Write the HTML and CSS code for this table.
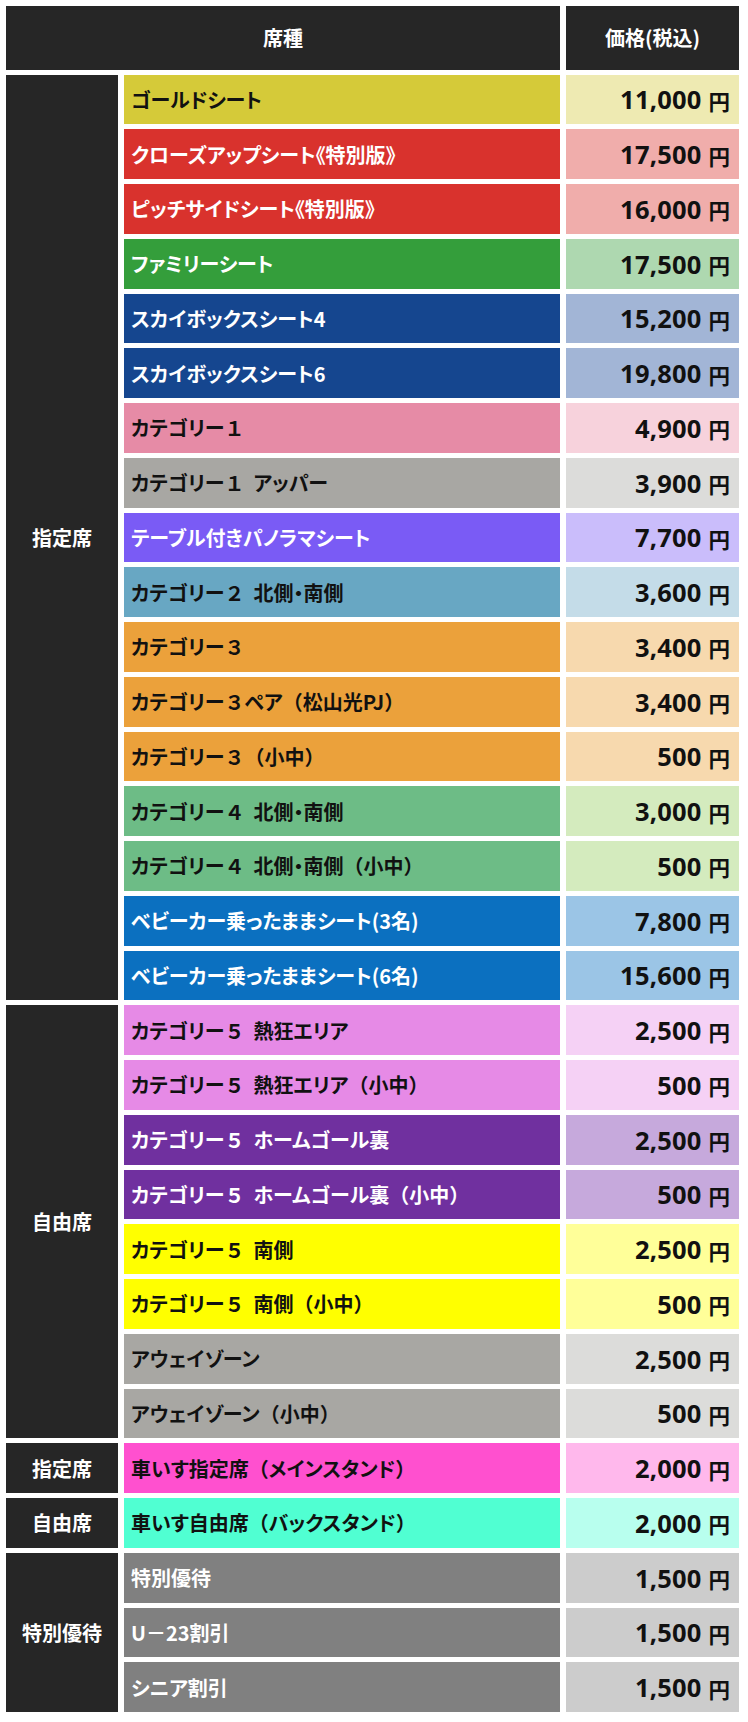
FILE: index.html
```html
<!DOCTYPE html>
<html lang="ja">
<head>
<meta charset="utf-8">
<title>席種・価格</title>
<link rel="stylesheet" href="styles.css">
</head>
<body>
<div class="table">
  <div class="head head-name">席種</div>
  <div class="head head-price">価格(税込)</div>

  <div class="grp span-17">指定席</div>
  <div class="name c-gold">ゴールドシート</div><div class="price p-gold"><span class="num">11,000</span><span class="yen">円</span></div>
  <div class="name c-red light">クローズアップシート《特別版》</div><div class="price p-red"><span class="num">17,500</span><span class="yen">円</span></div>
  <div class="name c-red light">ピッチサイドシート《特別版》</div><div class="price p-red"><span class="num">16,000</span><span class="yen">円</span></div>
  <div class="name c-green light">ファミリーシート</div><div class="price p-green"><span class="num">17,500</span><span class="yen">円</span></div>
  <div class="name c-navy light">スカイボックスシート4</div><div class="price p-navy"><span class="num">15,200</span><span class="yen">円</span></div>
  <div class="name c-navy light">スカイボックスシート6</div><div class="price p-navy"><span class="num">19,800</span><span class="yen">円</span></div>
  <div class="name c-pink">カテゴリー<span class="fw">１</span></div><div class="price p-pink"><span class="num">4,900</span><span class="yen">円</span></div>
  <div class="name c-gray">カテゴリー<span class="fw">１</span><span class="sp"></span>アッパー</div><div class="price p-gray"><span class="num">3,900</span><span class="yen">円</span></div>
  <div class="name c-violet light">テーブル付きパノラマシート</div><div class="price p-violet"><span class="num">7,700</span><span class="yen">円</span></div>
  <div class="name c-teal">カテゴリー<span class="fw">２</span><span class="sp"></span>北側・南側</div><div class="price p-teal"><span class="num">3,600</span><span class="yen">円</span></div>
  <div class="name c-orange">カテゴリー<span class="fw">３</span></div><div class="price p-orange"><span class="num">3,400</span><span class="yen">円</span></div>
  <div class="name c-orange">カテゴリー<span class="fw">３</span>ペア<span class="fw">（松山光PJ）</span></div><div class="price p-orange"><span class="num">3,400</span><span class="yen">円</span></div>
  <div class="name c-orange">カテゴリー<span class="fw">３</span><span class="fw">（小中）</span></div><div class="price p-orange"><span class="num">500</span><span class="yen">円</span></div>
  <div class="name c-mint">カテゴリー<span class="fw">４</span><span class="sp"></span>北側・南側</div><div class="price p-mint"><span class="num">3,000</span><span class="yen">円</span></div>
  <div class="name c-mint">カテゴリー<span class="fw">４</span><span class="sp"></span>北側・南側<span class="fw">（小中）</span></div><div class="price p-mint"><span class="num">500</span><span class="yen">円</span></div>
  <div class="name c-blue light">ベビーカー乗ったままシート(3名)</div><div class="price p-blue"><span class="num">7,800</span><span class="yen">円</span></div>
  <div class="name c-blue light">ベビーカー乗ったままシート(6名)</div><div class="price p-blue"><span class="num">15,600</span><span class="yen">円</span></div>

  <div class="grp span-8">自由席</div>
  <div class="name c-lilac">カテゴリー<span class="fw">５</span><span class="sp"></span>熱狂エリア</div><div class="price p-lilac"><span class="num">2,500</span><span class="yen">円</span></div>
  <div class="name c-lilac">カテゴリー<span class="fw">５</span><span class="sp"></span>熱狂エリア<span class="fw">（小中）</span></div><div class="price p-lilac"><span class="num">500</span><span class="yen">円</span></div>
  <div class="name c-purple light">カテゴリー<span class="fw">５</span><span class="sp"></span>ホームゴール裏</div><div class="price p-purple"><span class="num">2,500</span><span class="yen">円</span></div>
  <div class="name c-purple light">カテゴリー<span class="fw">５</span><span class="sp"></span>ホームゴール裏<span class="fw">（小中）</span></div><div class="price p-purple"><span class="num">500</span><span class="yen">円</span></div>
  <div class="name c-yellow">カテゴリー<span class="fw">５</span><span class="sp"></span>南側</div><div class="price p-yellow"><span class="num">2,500</span><span class="yen">円</span></div>
  <div class="name c-yellow">カテゴリー<span class="fw">５</span><span class="sp"></span>南側<span class="fw">（小中）</span></div><div class="price p-yellow"><span class="num">500</span><span class="yen">円</span></div>
  <div class="name c-gray">アウェイゾーン</div><div class="price p-gray"><span class="num">2,500</span><span class="yen">円</span></div>
  <div class="name c-gray">アウェイゾーン<span class="fw">（小中）</span></div><div class="price p-gray"><span class="num">500</span><span class="yen">円</span></div>

  <div class="grp span-1">指定席</div>
  <div class="name c-magenta">車いす指定席<span class="fw">（</span>メインスタンド<span class="fw">）</span></div><div class="price p-magenta"><span class="num">2,000</span><span class="yen">円</span></div>

  <div class="grp span-1">自由席</div>
  <div class="name c-aqua">車いす自由席<span class="fw">（</span>バックスタンド<span class="fw">）</span></div><div class="price p-aqua"><span class="num">2,000</span><span class="yen">円</span></div>

  <div class="grp span-3">特別優待</div>
  <div class="name c-dim light">特別優待</div><div class="price p-dim"><span class="num">1,500</span><span class="yen">円</span></div>
  <div class="name c-dim light">U<span class="fw">－</span>23割引</div><div class="price p-dim"><span class="num">1,500</span><span class="yen">円</span></div>
  <div class="name c-dim light">シニア割引</div><div class="price p-dim"><span class="num">1,500</span><span class="yen">円</span></div>
</div>
</body>
</html>
```

FILE: styles.css
```css
html, body {
  margin: 0;
  padding: 0;
  background: #ffffff;
}

body {
  font-family: "Noto Sans CJK JP", "Noto Sans", sans-serif;
  font-weight: 700;
  color: #111111;
}

.table {
  display: grid;
  grid-template-columns: 112px 436px 173px;
  grid-template-rows: 63.5px;
  grid-auto-rows: 49.75px;
  column-gap: 6px;
  row-gap: 5px;
  margin: 6px 0 0 6px;
  width: 733px;
}

.head {
  background: #262626;
  color: #ffffff;
  display: flex;
  align-items: center;
  justify-content: center;
  font-size: 20px;
}

.head-name {
  grid-column: 1 / 3;
}

.head-price {
  grid-column: 3;
}

.grp {
  grid-column: 1;
  background: #262626;
  color: #ffffff;
  display: flex;
  align-items: center;
  justify-content: center;
  font-size: 20px;
}

.span-17 { grid-row: span 17; }
.span-8 { grid-row: span 8; }
.span-3 { grid-row: span 3; }
.span-1 { grid-row: span 1; }

.name {
  grid-column: 2;
  display: flex;
  align-items: center;
  padding-left: 7px;
  font-size: 20px;
  font-feature-settings: "palt" 1;
  color: #111111;
  white-space: pre;
  overflow: hidden;
}

.name.light {
  color: #ffffff;
}

.fw {
  font-feature-settings: normal;
}

.sp {
  display: inline-block;
  width: 9px;
}

.price {
  grid-column: 3;
  display: flex;
  align-items: center;
  justify-content: flex-end;
  padding-right: 9px;
  color: #111111;
}

.num {
  font-family: "Open Sans", "Noto Sans", sans-serif;
  font-weight: 700;
  font-size: 25.5px;
  letter-spacing: 0.2px;
}

.yen {
  font-size: 21.5px;
  margin-left: 7px;
  position: relative;
  top: 1px;
}

/* name colours */
.c-gold { background: #d5ca39; }
.c-red { background: #d9322d; }
.c-green { background: #349e3b; }
.c-navy { background: #15468f; }
.c-pink { background: #e68ba6; }
.c-gray { background: #a8a7a3; }
.c-violet { background: #7a5bf5; }
.c-teal { background: #68a7c3; }
.c-orange { background: #eba13b; }
.c-mint { background: #6dbc86; }
.c-blue { background: #0b70c0; }
.c-lilac { background: #e68ae6; }
.c-purple { background: #70309f; }
.c-yellow { background: #ffff00; }
.c-magenta { background: #ff50cf; }
.c-aqua { background: #50ffd2; }
.c-dim { background: #808080; }

/* price colours */
.p-gold { background: #eeeab2; }
.p-red { background: #f0adab; }
.p-green { background: #aed8b0; }
.p-navy { background: #a2b5d6; }
.p-pink { background: #f7d2dc; }
.p-gray { background: #dcdcda; }
.p-violet { background: #cabdfb; }
.p-teal { background: #c4dce8; }
.p-orange { background: #f7d9ae; }
.p-mint { background: #d4ebbe; }
.p-blue { background: #9bc5e6; }
.p-lilac { background: #f5d1f5; }
.p-purple { background: #c6a9dc; }
.p-yellow { background: #ffff99; }
.p-magenta { background: #ffb8ec; }
.p-aqua { background: #b8ffee; }
.p-dim { background: #cccccc; }
```
